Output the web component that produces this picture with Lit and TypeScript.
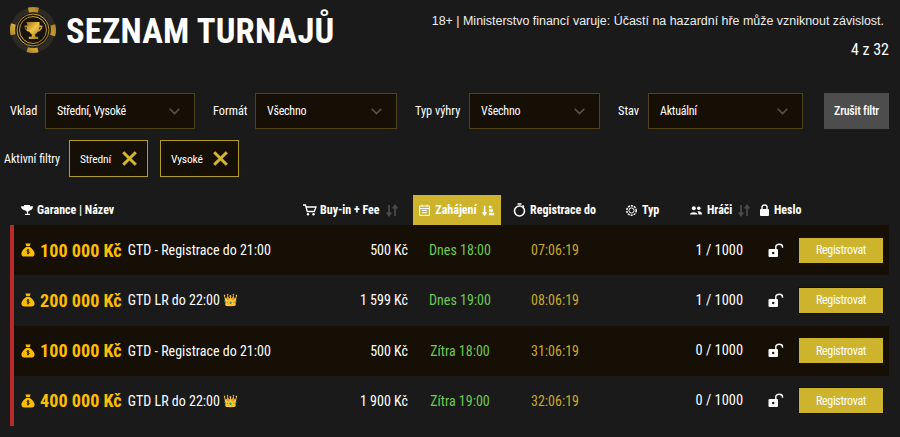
import { LitElement, html, css, svg } from 'lit';
import { customElement } from 'lit/decorators.js';

interface Tournament {
  prize: string;
  name: string;
  crown?: boolean;
  buyIn: string;
  start: string;
  regTo: string;
  players: string;
  alt?: boolean;
}

const ROWS: Tournament[] = [
  { prize: '100 000 Kč', name: 'GTD - Registrace do 21:00', buyIn: '500 Kč', start: 'Dnes 18:00', regTo: '07:06:19', players: '1 / 1000' },
  { prize: '200 000 Kč', name: 'GTD LR do 22:00', crown: true, buyIn: '1 599 Kč', start: 'Dnes 19:00', regTo: '08:06:19', players: '1 / 1000', alt: true },
  { prize: '100 000 Kč', name: 'GTD - Registrace do 21:00', buyIn: '500 Kč', start: 'Zítra 18:00', regTo: '31:06:19', players: '0 / 1000' },
  { prize: '400 000 Kč', name: 'GTD LR do 22:00', crown: true, buyIn: '1 900 Kč', start: 'Zítra 19:00', regTo: '32:06:19', players: '0 / 1000', alt: true }
];

const chevron = html`<svg width="11" height="7" viewBox="0 0 11 7"><path d="M.7.8l4.800 4.800L10.300.8" fill="none" stroke="#5c5646" stroke-width="1.500"/></svg>`;

const cross = html`<svg width="15" height="15" viewBox="0 0 15 15"><path d="M1.200 1.200l12.600 12.600M13.800 1.200L1.200 13.800" stroke="#d4b82c" stroke-width="3" fill="none"/></svg>`;

const sortIcon = (color: string) => svg`<svg class="sort" width="12" height="13" viewBox="0 0 12 13"><path d="M3 1v10M0.800 8.500L3 11.500l2.200-3M9 12V2M6.800 4.500L9 1.500l2.200 3" fill="none" stroke="${color}" stroke-width="1.800"/></svg>`;

const bag = html`<svg width="14" height="14" viewBox="0 0 14 14"><path d="M4.400 0.600h5.200L8.600 3.200H5.400zM5.200 3.900h3.600C11 5.400 13.600 8 13.600 10.600c0 2-1.200 3-3 3H3.400c-1.800 0-3-1-3-3C0.400 8 3 5.400 5.200 3.900z" fill="#fdbd00"/><path d="M8.300 7.300c-.3-.5-2.300-.7-2.300.4 0 1.200 2.300.6 2.300 1.800 0 1.100-2.100.9-2.500.3M7 6v5.400" stroke="#171006" stroke-width=".9" fill="none"/></svg>`;

const openLock = html`<svg width="16" height="15" viewBox="0 0 16 15"><rect x="0.500" y="6" width="9.500" height="8" rx="1" fill="#fff"/><circle cx="5.200" cy="10" r="1.200" fill="#1a1208"/><path d="M7.800 6V3.800c0-3.500 6.700-3.500 6.700 0v1" fill="none" stroke="#fff" stroke-width="1.400"/></svg>`;

const logo = html`<svg width="46" height="46" viewBox="0 0 46 46">
  <defs>
    <linearGradient id="g" x1="0" y1="0" x2="1" y2="1">
      <stop offset="0" stop-color="#8a6414"/><stop offset=".45" stop-color="#f2c544"/><stop offset="1" stop-color="#8a6414"/>
    </linearGradient>
  </defs>
  <circle cx="23" cy="23" r="22.500" fill="#2d2a26"/>
  <circle cx="23" cy="23" r="20.500" fill="none" stroke="url(#g)" stroke-width="5" stroke-dasharray="11 21.200" stroke-dashoffset="5.500" transform="rotate(-90 23 23)"/>
  <circle cx="23" cy="23" r="17" fill="#17140f"/>
  <circle cx="23" cy="23" r="16" fill="none" stroke="url(#g)" stroke-width="1"/>
  <circle cx="23" cy="23" r="13.500" fill="none" stroke="url(#g)" stroke-width="1"/>
  <path d="M16.500 15h13v3.500h3c0 3.500-2 6-4.800 6.300-.7 1.300-1.600 2-2.500 2.400v2.600h3v2.200h-9.400v-2.200h3v-2.600c-.9-.4-1.800-1.100-2.500-2.400-2.800-.3-4.800-2.800-4.800-6.300h3zM15.200 20c.2 1.300.9 2.300 1.900 2.800-.3-.9-.5-1.800-.6-2.800zM30.800 20h-1.300c-.1 1-.3 1.900-.6 2.800 1-.5 1.700-1.500 1.900-2.800z" fill="url(#g)"/>
</svg>`;

@customElement('app-root')
export class AppRoot extends LitElement {
  static override styles = css`
    :host {
      display: block;
      width: 900px;
      height: 437px;
      overflow: hidden;
      background: #1a1a1a;
      color: #fff;
      font-family: Roboto, 'Liberation Sans', sans-serif;
      font-stretch: 75%;
    }

    svg {
      flex: none;
    }

    .top {
      display: flex;
      justify-content: space-between;
      height: 93px;
      padding: 0 11px 0 10px;
    }

    .brand {
      display: flex;
      align-items: center;
      gap: 10px;
      height: 46px;
      margin-top: 7px;
    }

    h1 {
      margin: 0;
      padding-top: 2px;
      font-size: 34.600px;
      font-weight: 700;
      letter-spacing: 0.2px;
    }

    .notice {
      text-align: right;
      padding-top: 10px;
    }

    .notice-text {
      margin-right: 5px;
      font-family: 'Liberation Sans', Arial, sans-serif;
      font-size: 12.450px;
      font-stretch: 100%;
      color: #eee;
    }

    .count {
      margin-top: 11px;
      font-size: 16px;
    }

    .filters {
      display: flex;
      align-items: center;
      height: 36px;
      padding-left: 10px;
      font-size: 12.300px;
    }

    .select {
      box-sizing: border-box;
      height: 36px;
      padding: 0 14px 0 11px;
      display: flex;
      align-items: center;
      justify-content: space-between;
      background: #150f05;
      border: 1px solid #4f431a;
      font-size: 12px;
      letter-spacing: -0.25px;
    }

    .lbl-vklad { width: 35px; }
    .lbl-format { width: 42px; margin-left: 18px; }
    .lbl-type { width: 54px; margin-left: 18px; }
    .lbl-state { width: 30px; margin-left: 18px; }

    .w-vklad { width: 150px; }
    .w-format { width: 142px; }
    .w-type { width: 131px; }
    .w-state { width: 155px; }

    .clear {
      width: 65px;
      height: 36px;
      margin-left: 21px;
      display: flex;
      align-items: center;
      justify-content: center;
      background: #4d4d4d;
      font-size: 12px;
      letter-spacing: -0.25px;
      font-weight: 500;
    }

    .active {
      display: flex;
      align-items: center;
      gap: 12px;
      height: 37px;
      margin-top: 11px;
      padding-left: 4px;
      font-size: 12px;
    }

    .active .label {
      width: 53px;
      white-space: nowrap;
    }

    .chip {
      box-sizing: border-box;
      width: 79px;
      height: 37px;
      padding: 0 10px;
      display: flex;
      align-items: center;
      justify-content: space-between;
      background: #150f05;
      border: 1px solid #b09a28;
      font-size: 11.600px;
      letter-spacing: -0.2px;
    }

    .columns {
      display: grid;
      grid-template-columns: 283px 116px 88px 119px 63px 72px 40px 94px;
      padding-left: 14px;
      width: 875px;
    }

    .head {
      height: 30px;
      margin-top: 18px;
      font-size: 12px;
      font-weight: 700;
      white-space: nowrap;
    }

    .head > div {
      display: flex;
      align-items: center;
      gap: 4px;
    }

    .head .sorted {
      justify-content: center;
      gap: 5px;
      background: #cdb42c;
    }

    .head .sort {
      margin-left: 1px;
    }

    .head .c-name { padding-left: 7px; }
    .head .c-buy { padding-left: 6px; gap: 3px; }
    .head .c-buy .sort { margin-left: 3px; }
    .head .c-reg { padding-left: 12px; }
    .head .c-type { padding-left: 6px; gap: 5px; }
    .head .c-players { padding-left: 7px; gap: 5px; }
    .head .c-pass { padding-left: 5px; gap: 5px; }

    .list {
      margin-left: 10px;
      border-left: 4px solid #b92b2b;
      width: 875px;
      height: 201px;
    }

    .row {
      height: 50.250px;
      padding-left: 0;
      width: 875px;
      align-items: center;
      font-size: 14px;
    }

    .row.dark {
      background: #150f05;
    }

    .name {
      display: flex;
      align-items: center;
      padding-left: 7px;
      white-space: nowrap;
    }

    .prize {
      margin: 0 6px 0 5px;
      color: #fdbd00;
      font-size: 18.200px;
      font-weight: 700;
    }

    .crown {
      margin-left: 3px;
      font-size: 12px;
      font-family: 'Noto Color Emoji', sans-serif;
    }

    .buy {
      text-align: right;
      padding-right: 5px;
      font-size: 14px;
    }

    .start {
      padding-left: 6px;
      text-align: center;
      color: #6ecb52;
    }

    .reg {
      padding-left: 30px;
      color: #c9a92a;
    }

    .players {
      grid-column: 5 / 7;
      text-align: right;
      padding-right: 12px;
      font-size: 14.400px;
    }

    .lock {
      display: flex;
      padding-left: 13px;
    }

    .btn {
      box-sizing: border-box;
      width: 86px;
      height: 27px;
      margin-left: 3px;
      display: flex;
      align-items: center;
      justify-content: center;
      background: #cdb42c;
      border: 1px solid #111;
      font-size: 12px;
      letter-spacing: -0.3px;
    }
  `;

  override render() {
    return html`
      <div class="top">
        <div class="brand">${logo}<h1>SEZNAM TURNAJŮ</h1></div>
        <div class="notice">
          <span class="notice-text">18+ | Ministerstvo financí varuje: Účastí na hazardní hře může vzniknout závislost.</span>
          <div class="count">4 z 32</div>
        </div>
      </div>

      <div class="filters">
        <span class="lbl-vklad">Vklad</span>
        <div class="select w-vklad">Střední, Vysoké ${chevron}</div>
        <span class="lbl-format">Formát</span>
        <div class="select w-format">Všechno ${chevron}</div>
        <span class="lbl-type">Typ výhry</span>
        <div class="select w-type">Všechno ${chevron}</div>
        <span class="lbl-state">Stav</span>
        <div class="select w-state">Aktuální ${chevron}</div>
        <div class="clear">Zrušit filtr</div>
      </div>

      <div class="active">
        <span class="label">Aktivní filtry</span>
        <div class="chip">Střední ${cross}</div>
        <div class="chip">Vysoké ${cross}</div>
      </div>

      <div class="columns head">
        <div class="c-name">
          <svg width="12" height="11" viewBox="0 0 12 11"><path d="M3 0h6v1.300h3c0 2.500-1.400 4-3.400 4.300-.4.600-1 1-1.600 1.200v2h2V10H4V8.800h2v-2c-.6-.2-1.200-.6-1.600-1.200C2.400 5.300 0 3.800 0 1.300h3z" fill="#fff"/></svg>
          Garance | Název
        </div>
        <div class="c-buy">
          <svg width="14" height="12" viewBox="0 0 14 12"><path d="M0 1h2.500l1.800 6.500h7L13 3H3.500" fill="none" stroke="#fff" stroke-width="1.300"/><circle cx="5" cy="10.300" r="1.200" fill="#fff"/><circle cx="10.500" cy="10.300" r="1.200" fill="#fff"/></svg>
          Buy-in + Fee ${sortIcon('#4a4a4a')}
        </div>
        <div class="sorted">
          <svg width="11" height="12" viewBox="0 0 11 12"><path d="M.6 2h9.800v9.400H.6zM.6 4.500h9.800M3 .5v2M8 .5v2M3 6.500h5M3 8.800h5" fill="none" stroke="#fff" stroke-width="1"/></svg>
          Zahájení
          <svg width="13" height="13" viewBox="0 0 15 13"><path d="M3 1v10M.8 8.500L3 11.500l2.200-3" fill="none" stroke="#fff" stroke-width="1.800"/><path d="M8 1h3v3H8zM8 5h4.500v3H8zM8 9h6v3H8z" fill="#fff"/></svg>
        </div>
        <div class="c-reg">
          <svg width="13" height="14" viewBox="0 0 13 14"><circle cx="6.500" cy="8" r="5" fill="none" stroke="#fff" stroke-width="1.600"/><path d="M4.500 1h4M9.500 2.500l1.500 1.500" stroke="#fff" stroke-width="1.500"/></svg>
          Registrace do
        </div>
        <div class="c-type">
          <svg width="11" height="11" viewBox="0 0 11 11"><circle cx="5.500" cy="5.500" r="4.700" fill="none" stroke="#fff" stroke-width="1.500" stroke-dasharray="2 1"/><circle cx="5.500" cy="5.500" r="2.600" fill="none" stroke="#fff" stroke-width="1"/></svg>
          Typ
        </div>
        <div class="c-players">
          <svg width="12" height="9" viewBox="0 0 12 9"><circle cx="3.800" cy="2.200" r="2" fill="#fff"/><circle cx="8.800" cy="2.200" r="1.800" fill="#fff"/><path d="M0 8.500C0 5.500 7.500 5.500 7.500 8.500zM8.500 8.500c0-1.300-.3-2.200-1-3 2-.6 4.500.3 4.500 3z" fill="#fff"/></svg>
          Hráči ${sortIcon('#4a4a4a')}
        </div>
        <div class="c-pass">
          <svg width="9" height="12" viewBox="0 0 9 12"><rect y="5" width="9" height="7" rx="1" fill="#fff"/><path d="M2 5V3c0-2.700 5-2.700 5 0v2" fill="none" stroke="#fff" stroke-width="1.400"/></svg>
          Heslo
        </div>
        <div></div>
      </div>

      <div class="list">
        ${ROWS.map(
          (r) => html`
            <div class="columns row ${r.alt ? '' : 'dark'}">
              <div class="name">
                ${bag}<span class="prize">${r.prize}</span>${r.name}
                ${r.crown ? html`<span class="crown">👑</span>` : ''}
              </div>
              <div class="buy">${r.buyIn}</div>
              <div class="start">${r.start}</div>
              <div class="reg">${r.regTo}</div>
              <div class="players">${r.players}</div>
              <div class="lock">${openLock}</div>
              <div class="btn">Registrovat</div>
            </div>
          `
        )}
      </div>
    `;
  }
}
